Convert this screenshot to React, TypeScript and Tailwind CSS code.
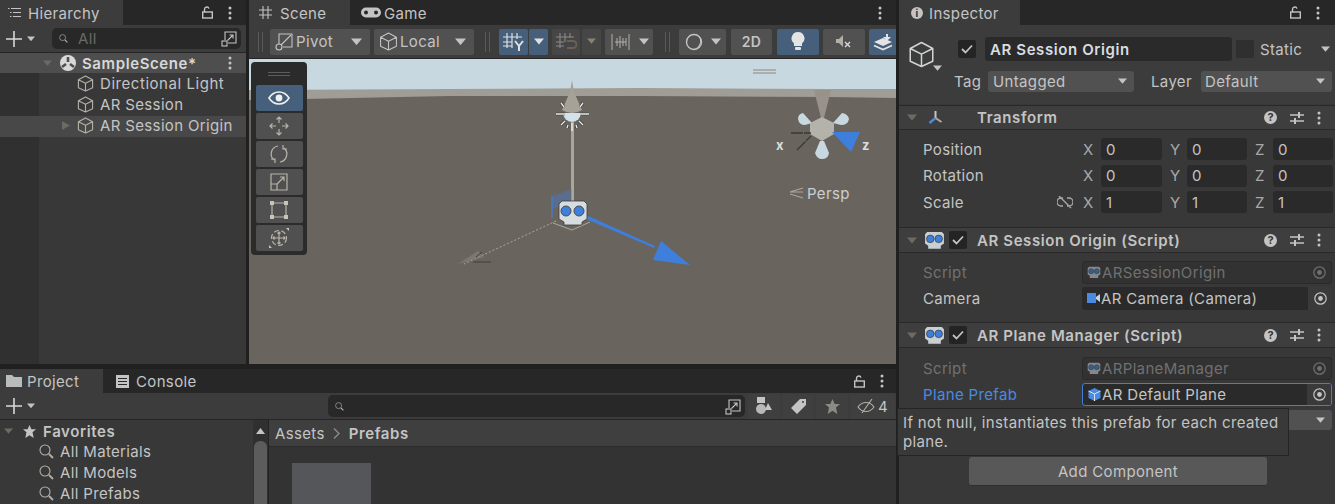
import React from "react";

const C = "#c4c4c4";
const Arrow = ({ c = "#c4c4c4", s = 9, cls = "" }: { c?: string; s?: number; cls?: string }) => (
  <svg width={s} height={s * 0.7} viewBox="0 0 10 7" className={"shrink-0 " + cls}><path d="M0 0.5h10L5 6.5z" fill={c} /></svg>
);
const Dots = ({ cls = "" }: { cls?: string }) => (
  <svg width="4" height="14" viewBox="0 0 4 14" className={"shrink-0 " + cls}><circle cx="2" cy="2" r="1.5" fill={C} /><circle cx="2" cy="7" r="1.5" fill={C} /><circle cx="2" cy="12" r="1.5" fill={C} /></svg>
);
const Lock = () => (
  <svg width="11" height="13" viewBox="0 0 11 13" className="shrink-0" fill="none" stroke={C} strokeWidth="1.4"><rect x="0.7" y="6" width="9.6" height="6" /><path d="M2.5 6V3.2a2.3 2.3 0 0 1 4.5-.6" /></svg>
);
const Cube = ({ s = 17, c = "#b4b0a8", w = 1.2 }: { s?: number; c?: string; w?: number }) => (
  <svg width={s} height={s} viewBox="0 0 18 18" className="shrink-0" fill="none" stroke={c} strokeWidth={w} strokeLinejoin="round"><path d="M9 1l7.5 4v8.5L9 17l-7.5-3.5V5zM1.5 5L9 8.8 16.5 5M9 8.8V17" /></svg>
);
const Robot = ({ s = 21, dim = false }: { s?: number; dim?: boolean }) => (
  <svg width={s} height={s * 0.9} viewBox="0 0 20 18" className="shrink-0" opacity={dim ? 0.55 : 1}>
    <path d="M3 1h14l2 2v9l-3 2v3H4v-3l-3-2V3z" fill="#c9cfd2" />
    <circle cx="6" cy="7.5" r="3.6" fill="#3f7fdc" stroke="#3a3a3a" strokeWidth=".7" />
    <circle cx="14" cy="7.5" r="3.6" fill="#3f7fdc" stroke="#3a3a3a" strokeWidth=".7" />
  </svg>
);
const ExpandBtn = () => (
  <svg width="17" height="17" viewBox="0 0 17 17" fill="none" stroke={C} strokeWidth="1.1" className="shrink-0"><path d="M4 10V2h11v11H7" /><rect x="1" y="11" width="5" height="5" /><path d="M6.5 10.5L12 5M8.5 5H12v3.5" /></svg>
);
const Search = ({ s = 15 }: { s?: number }) => (
  <svg width={s} height={s} viewBox="0 0 15 15" fill="none" stroke="#b4b0a8" strokeWidth="1.1" className="shrink-0"><circle cx="6" cy="6" r="5" /><path d="M10 10l4 4" strokeWidth="1.8" /></svg>
);
const Tune = () => (
  <svg width="14" height="12" viewBox="0 0 14 12" stroke={C} strokeWidth="1.3" className="shrink-0"><path d="M0 3h14M0 9h14" /><path d="M9 0v6M5 6v6" strokeWidth="2" /></svg>
);
const Help = () => (
  <span className="w-[13px] h-[13px] rounded-full bg-[#c4c4c4] text-[#333] text-[11px] font-bold flex items-center justify-center leading-none tracking-normal">?</span>
);
const Check = () => (
  <span className="w-[18px] h-[18px] bg-[#242424] rounded-[2px] flex items-center justify-center shrink-0">
    <svg width="12" height="10" viewBox="0 0 12 10" fill="none" stroke="#c4c4c4" strokeWidth="1.8"><path d="M1 5l3.5 3.5L11 1.5" /></svg>
  </span>
);
const Target = ({ dim = false }: { dim?: boolean }) => (
  <svg width="13" height="13" viewBox="0 0 13 13" fill="none" stroke={dim ? "#707070" : C} strokeWidth="1.2" className="shrink-0"><circle cx="6.5" cy="6.5" r="5.7" /><circle cx="6.5" cy="6.5" r="1.8" fill={dim ? "#707070" : C} /></svg>
);

const TB = ({ cls, bg = "bg-[#515151]", children }: { cls: string; bg?: string; children?: React.ReactNode }) => (
  <div className={"h-[26px] rounded-[2px] flex items-center justify-center shrink-0 " + bg + " " + cls}>{children}</div>
);
const Sep = ({ cls }: { cls: string }) => (
  <div className={"w-[5px] h-[20px] border-x border-[#5a5a5a] shrink-0 " + cls} />
);

const ROW = "h-[21px] flex items-center pb-[2px]";
const BLUE = "bg-[#46607c]";
const DIM = "bg-[#464646]";
const BOLD = "font-semibold tracking-[0.6px]";

function Hierarchy() {
  return (
    <div className="w-[246px] flex flex-col shrink-0 h-full">
      <div className="h-[25px] flex items-center bg-[#272727] shrink-0">
        <div className="w-[123px] h-full bg-[#3c3c3c] flex items-center pl-[8px] gap-[7px]">
          <svg width="13" height="11" viewBox="0 0 13 11" stroke={C} strokeWidth="1.2" className="shrink-0"><path d="M3 1.5h10M5 5.5h8M5 9.5h8" /><path d="M0 1.5h1.5M2 5.5h1.5M2 9.5h1.5" /></svg>
          <span className="pt-[2px]">Hierarchy</span>
        </div>
        <div className="flex-1 flex justify-end items-center gap-[15px] pr-[14px]"><Lock /><Dots /></div>
      </div>
      <div className="h-[28px] bg-[#3c3c3c] flex items-center shrink-0 border-b border-[#252525]">
        <svg width="16" height="16" viewBox="0 0 16 16" stroke="#d8d8d8" strokeWidth="1.6" className="ml-[6px]"><path d="M8 0v16M0 8h16" /></svg>
        <Arrow cls="ml-[5px]" s={8} />
        <div className="ml-[17px] w-[189px] h-[21px] rounded-[5px] bg-[#282828] flex items-center pl-[7px]">
          <Search s={9} />
          <span className="ml-[10px] text-[#6a6a6a]">All</span>
          <span className="ml-auto mr-[3px]"><ExpandBtn /></span>
        </div>
      </div>
      <div className="flex-1 bg-[linear-gradient(90deg,#303030_39px,#383838_39px)] flex flex-col">
        <div className={"h-[20px] bg-[#4e4e4e] flex items-center text-[#d8d8d8] mb-[1px] " + BOLD}>
          <Arrow c="#6d6a60" cls="ml-[43px]" s={9} />
          <svg width="16" height="16" viewBox="0 0 16 16" className="ml-[8px] shrink-0"><circle cx="8" cy="8" r="8" fill="#d8d8d8" /><path d="M8 2v5M2 12l4-3M14 12l-4-3" stroke="#4e4e4e" strokeWidth="2.6" /></svg>
          <span className="ml-[6px]">SampleScene*</span>
          <Dots cls="ml-auto mr-[14px]" />
        </div>
        <div className={ROW + " pl-[77px] gap-[6px]"}><Cube /><span className="tracking-[0.55px]">Directional Light</span></div>
        <div className={ROW + " pl-[77px] gap-[6px]"}><Cube />AR Session</div>
        <div className={ROW + " pl-[62px] gap-[6px] bg-[#484848]"}>
          <svg width="8" height="9" viewBox="0 0 8 9" className="shrink-0 mr-[1px]"><path d="M0 0l8 4.5L0 9z" fill="#6d6a60" /></svg>
          <Cube />AR Session Origin
        </div>
      </div>
    </div>
  );
}

function SceneToolbar() {
  return (
    <div className="h-[34px] bg-[#3c3c3c] flex items-center pl-[9px] shrink-0 overflow-hidden border-b border-[#252525]">
      <Sep cls="" />
      <TB cls="ml-[7px] w-[100px] justify-start pl-[5px]">
        <svg width="18" height="18" viewBox="0 0 18 18" fill="none" stroke={C} strokeWidth="1.1" className="shrink-0"><path d="M4 11V1h13v13H8" /><circle cx="4" cy="14" r="3" /><path d="M6 12L16 2" /></svg>
        <span className="ml-[3px]">Pivot</span><Arrow cls="ml-auto mr-[8px]" s={11} />
      </TB>
      <TB cls="ml-[4px] w-[100px] justify-start pl-[5px]">
        <Cube s={19} c={C} w={1} />
        <span className="ml-[2px]">Local</span><Arrow cls="ml-auto mr-[8px]" s={11} />
      </TB>
      <Sep cls="ml-[11px]" />
      <TB bg={BLUE} cls="ml-[9px] w-[29px]">
        <svg width="22" height="20" viewBox="0 0 22 20" fill="none" stroke="#e0e0e0" strokeWidth="1.2"><path d="M4 1v15M9 1v15M14 1v6M0 5h19M0 10h9M0 14h9" /><path d="M12 9l4 5 4-5M16 14v5" strokeWidth="2" /></svg>
      </TB>
      <TB bg={BLUE} cls="ml-px w-[19px]"><Arrow s={10} c="#e0e0e0" /></TB>
      <TB bg={DIM} cls="ml-[4px] w-[28px]">
        <svg width="22" height="20" viewBox="0 0 22 20" fill="none" stroke="#8a8a8a" strokeWidth="1.1"><path d="M5 1v15M10 1v9M15 1v5M1 5h18M1 10h8M1 14h8" /><path d="M12 9h6a3 3 0 0 1 0 7h-6" stroke="#6d6055" strokeWidth="2" /></svg>
      </TB>
      <TB bg={DIM} cls="ml-[2px] w-[19px]"><Arrow s={9} c="#8a8270" /></TB>
      <TB cls="ml-[4px] w-[48px] justify-start pl-[6px]">
        <svg width="20" height="18" viewBox="0 0 20 18" fill="none" stroke="#b4b0a8" strokeWidth="1"><path d="M1 1v16M18 1v16M4 9h11M6 5v8M9 3v12M12 5v8M15 5v8" /></svg>
        <Arrow cls="ml-auto mr-[4px]" s={10} />
      </TB>
      <Sep cls="ml-[12px]" />
      <TB cls="ml-[9px] w-[47px] justify-start pl-[6px]">
        <svg width="18" height="18" viewBox="0 0 18 18" fill="none"><circle cx="9" cy="9" r="7.5" stroke="#c4c4c4" strokeWidth="1.4" /><path d="M13 2.5a8 8 0 0 1-5 13.5 7.5 7.5 0 0 0 8-8 7 7 0 0 0-3-5.5z" fill="#d8d8d8" /></svg>
        <Arrow cls="ml-auto mr-[5px]" s={10} />
      </TB>
      <TB cls="ml-[5px] w-[41px] font-semibold text-[14px]">2D</TB>
      <TB bg={BLUE} cls="ml-[5px] w-[42px]">
        <svg width="14" height="19" viewBox="0 0 14 19"><path d="M7 0a6.5 6.5 0 0 1 4 11.6V14H3v-2.4A6.5 6.5 0 0 1 7 0z" fill="#e4e4e4" /><rect x="4" y="15" width="6" height="3" rx="1" fill="#e4e4e4" /></svg>
      </TB>
      <TB cls="ml-[4px] w-[42px]">
        <svg width="16" height="14" viewBox="0 0 16 14"><path d="M0 4h3l4-4v12L3 8H0z" fill="#b4b0a8" /><path d="M9 7l5 5M14 7l-5 5" stroke="#d8d8d8" strokeWidth="1.4" /></svg>
      </TB>
      <TB bg={BLUE} cls="ml-[4px] w-[28px]">
        <svg width="20" height="18" viewBox="0 0 20 18"><path d="M1 9l9 4 9-4-9-4z" fill="#e4e4e4" /><path d="M1 12.5l9 4 9-4" fill="none" stroke="#e4e4e4" strokeWidth="1.6" /><path d="M13 1h2v3h3l-4 4-4-4h3z" fill="#e4e4e4" /></svg>
      </TB>
    </div>
  );
}

const OverlayBtn = ({ active, children }: { active?: boolean; children: React.ReactNode }) => (
  <div className={"h-[26px] w-[47px] flex items-center justify-center rounded-[2px] " + (active ? "bg-[#46607c]" : "bg-[#505050]")}>{children}</div>
);

function SceneTools() {
  const p = { fill: "none", stroke: "#b8b4aa", strokeWidth: 1.2 };
  return (
    <div className="absolute left-[2px] top-[3px] w-[56px] h-[193px] bg-[#2b2b2b] rounded-[4px] flex flex-col items-center">
      <div className="h-[23px] flex items-center shrink-0">
        <div className="w-[22px] h-[4px] border-y border-[#5c5c5c]" />
      </div>
      <div className="flex flex-col gap-[2px]">
        <OverlayBtn active>
          <svg width="22" height="14" viewBox="0 0 22 14"><path d="M1 7c5-8 15-8 20 0-5 8-15 8-20 0z" fill="none" stroke="#f0f0f0" strokeWidth="1.6" /><circle cx="11" cy="7" r="3.4" fill="#f0f0f0" /></svg>
        </OverlayBtn>
        <OverlayBtn>
          <svg width="20" height="20" viewBox="0 0 20 20" {...p}><path d="M10 1v6M10 13v6M1 10h6M13 10h6M7.5 3.5L10 1l2.5 2.5M7.5 16.5L10 19l2.5-2.5M3.5 7.5L1 10l2.5 2.5M16.5 7.5L19 10l-2.5 2.5" /></svg>
        </OverlayBtn>
        <OverlayBtn>
          <svg width="20" height="20" viewBox="0 0 20 20" {...p}><path d="M9 2a8 8 0 0 0-4 14M11 18a8 8 0 0 0 4-14M2 15h4v4M18 5h-4V1" /></svg>
        </OverlayBtn>
        <OverlayBtn>
          <svg width="18" height="18" viewBox="0 0 18 18" {...p}><path d="M1 1h16v16H1zM1 11h6v6M7 11L14 4M10 4h4v4" /></svg>
        </OverlayBtn>
        <OverlayBtn>
          <svg width="18" height="18" viewBox="0 0 18 18" {...p}><path d="M4 2h10M4 16h10M2 4v10M16 4v10" /><g fill="#c8c4ba" stroke="none"><rect x="0" y="0" width="4" height="4" /><rect x="14" y="0" width="4" height="4" /><rect x="0" y="14" width="4" height="4" /><rect x="14" y="14" width="4" height="4" /></g></svg>
        </OverlayBtn>
        <OverlayBtn>
          <svg width="20" height="20" viewBox="0 0 20 20" {...p}><circle cx="10" cy="10" r="7.5" strokeDasharray="5 2.5" /><path d="M10 4v12M4 10h12M8.5 5.5L10 4l1.5 1.5M8.5 14.5L10 16l1.5-1.5M5.5 8.5L4 10l1.5 1.5M14.5 8.5L16 10l-1.5 1.5" /><path d="M17 0h3v3zM0 20v-3l3 3z" fill="#c8c4ba" stroke="none" /></svg>
        </OverlayBtn>
      </div>
    </div>
  );
}

function Scene() {
  return (
    <div className="w-[647px] ml-[3px] flex flex-col shrink-0 h-full">
      <div className="h-[25px] bg-[#272727] flex items-center shrink-0">
        <div className="w-[101px] h-full bg-[#3c3c3c] flex items-center pl-[10px] gap-[8px]">
          <svg width="13" height="13" viewBox="0 0 13 13" stroke={C} strokeWidth="1.1" className="shrink-0"><path d="M4 0v13M9 0v13M0 4h13M0 9h13" /></svg>
          <span className="pt-[2px]">Scene</span>
        </div>
        <div className="ml-[11px] flex items-center gap-[3px]">
          <svg width="20" height="11" viewBox="0 0 20 11" className="shrink-0"><rect width="20" height="10" y="0.5" rx="5" fill={C} /><circle cx="5" cy="5.5" r="2" fill="#272727" /><circle cx="15" cy="5.5" r="2" fill="#272727" /></svg>
          <span className="pt-[2px]">Game</span>
        </div>
        <Dots cls="ml-auto mr-[14px]" />
      </div>
      <SceneToolbar />
      <div className="relative flex-1 overflow-hidden bg-[#6a645e]">
        <svg viewBox="249 59 647 305" width="647" height="305" className="absolute inset-0">
          <rect x="249" y="59" width="647" height="305" fill="#6a645e" />
          <path d="M249 59h647v33H249z" fill="#c8d8e0" />
          <path d="M249 90L450 89 640 88 830 89 896 89v9L830 97 640 96 450 96 249 100z" fill="#9f9d95" />
          <path d="M753 70h23M753 73h23" stroke="#8a847c" strokeWidth="1.2" />
          {/* directional light */}
          <path d="M572 80l2 12 8 18q-10 6-20 0l8-18z" fill="#a6a298" />
          <rect x="571" y="122" width="3" height="80" fill="#aaa69c" />
          <path d="M563 113a9 9 0 0 0 18 0z" fill="#d3e1e8" />
          <g stroke="#33312f" strokeWidth="2.6">
            <path d="M556 114h9M580 114h9M561 103l3 4M583 103l-3 4M561 125l4-4M583 125l-4-4M567 128l1-3M577 128l-1-3" />
          </g>
          <g stroke="#e8eef0" strokeWidth="1.4">
            <path d="M556 114h9M580 114h9M561 103l3 4M583 103l-3 4M561 125l4-4M583 125l-4-4M567 128l1-3M577 128l-1-3M572 131v-8" />
          </g>
          {/* x axis */}
          <path d="M556 221L464 264" stroke="#aaa69c" strokeWidth="1" strokeDasharray="2 2" />
          <path d="M458 264l20-13 6 6z" fill="#8a867c" opacity=".6" />
          <path d="M473 262h18M482 252l-6 5" stroke="#403c3a" strokeWidth="1" />
          {/* base */}
          <path d="M553 223l19 7 18-8" fill="none" stroke="#aaa69c" strokeWidth="1" />
          <path d="M552 196l20-7v14l-20 6z" fill="#3f7fdc" opacity=".35" />
          <path d="M552 196v22" stroke="#3f7fdc" strokeWidth="1.2" />
          {/* z arrow */}
          <path d="M586 215L655 246l-1 2L586 219z" fill="#3f7fdc" />
          <path d="M661 241l29 24-37-5z" fill="#3f7fdc" />
          {/* robot */}
          <path d="M562 201h22l3 3v15l-5 3v3h-18v-3l-5-3v-15z" fill="#d6dde0" stroke="#3d3a38" strokeWidth=".8" />
          <circle cx="566" cy="211" r="5" fill="#3f7fdc" stroke="#4b4b4b" />
          <circle cx="579" cy="211" r="5" fill="#3f7fdc" stroke="#4b4b4b" />
          {/* nav gizmo */}
          <path d="M814 90h17l-7 28h-3z" fill="#98928a" />
          <path d="M812 123L803 113Q798 114 798 119 799 125 805 125z" fill="#c8d8e0" />
          <path d="M833 123L842 113Q848 114 849 119 848 125 841 125z" fill="#c8d8e0" />
          <path d="M820 141L815 153Q817 159 822 159 828 159 829 153L824 141z" fill="#c8d8e0" />
          <path d="M822 117l12 6v11l-12 7-12-7v-11z" fill="#b4b2aa" />
          <path d="M832 132h28l-9 20z" fill="#3f7fdc" />
          <path d="M791 133h20M797 150l14-14" stroke="#39383a" strokeWidth="1.3" strokeDasharray="12 1" />
          <path d="M790 192l13-4M790 192l13 0M790 194l13 4" stroke="#aaa69c" strokeWidth="1.2" fill="none" />
        </svg>
        <div className="absolute left-[527px] top-[80px] text-[#d8dcdc] font-bold text-[13px] leading-none">x</div>
        <div className="absolute left-[613px] top-[80px] text-[#d8dcdc] font-bold text-[13px] leading-none">z</div>
        <div className="absolute left-[558px] top-[125px] text-[#c8d0d2] leading-[20px]">Persp</div>
        <SceneTools />
      </div>
    </div>
  );
}

function Project() {
  const Fav = ({ t }: { t: string }) => (
    <div className="h-[21px] flex items-center pl-[39px] gap-[6px] shrink-0"><Search />{t}</div>
  );
  const Btn = ({ w, children }: { w: string; children: React.ReactNode }) => (
    <div className={"h-[25px] bg-[#3f3f3f] flex items-center justify-center shrink-0 " + w}>{children}</div>
  );
  return (
    <div className="h-[135px] mt-[5px] flex flex-col shrink-0 w-[896px]">
      <div className="h-[24px] bg-[#272727] flex items-center shrink-0">
        <div className="w-[103px] h-full bg-[#3c3c3c] flex items-center pl-[6px] gap-[5px]">
          <svg width="16" height="12" viewBox="0 0 16 12" className="shrink-0"><path d="M0 0h6l2 2h8v10H0z" fill="#b8bcbc" /></svg>
          Project
        </div>
        <div className="ml-[13px] flex items-center gap-[7px]">
          <svg width="13" height="13" viewBox="0 0 13 13" className="shrink-0"><rect width="13" height="13" fill="#c4c4c4" /><path d="M2 3.5h9M2 6.5h9M2 9.5h9" stroke="#272727" /></svg>
          Console
        </div>
        <div className="ml-auto mr-[12px] flex items-center gap-[15px]"><Lock /><Dots /></div>
      </div>
      <div className="h-[27px] bg-[#3c3c3c] flex items-center shrink-0 border-b border-[#252525]">
        <svg width="16" height="16" viewBox="0 0 16 16" stroke="#d8d8d8" strokeWidth="1.6" className="ml-[6px]"><path d="M8 0v16M0 8h16" /></svg>
        <Arrow cls="ml-[5px]" s={8} />
        <div className="ml-[293px] w-[417px] h-[22px] rounded-[5px] bg-[#282828] flex items-center pl-[7px]">
          <Search s={9} />
          <span className="ml-auto mr-[3px]"><ExpandBtn /></span>
        </div>
        <div className="ml-[3px] flex gap-[2px]">
          <Btn w="w-[32px]">
            <svg width="16" height="18" viewBox="0 0 16 18"><rect x="1" y="0" width="8" height="6" fill="#c4c4c4" /><circle cx="5" cy="12" r="5" fill="#b8b8b8" /><path d="M12 6l4 7h-7z" fill="#c4c4c4" /></svg>
          </Btn>
          <Btn w="w-[32px]">
            <svg width="15" height="15" viewBox="0 0 15 15"><path d="M9 0h6v6l-9 9-6-6z" fill="#c4c4c4" /><circle cx="12" cy="3" r="1" fill="#3f3f3f" /></svg>
          </Btn>
          <Btn w="w-[32px]">
            <svg width="15" height="15" viewBox="0 0 15 15"><path d="M7.5 0l2.2 5H15l-4 3.5L12.3 15 7.5 11.8 2.7 15 4 8.5 0 5h5.3z" fill="#8c8a84" /></svg>
          </Btn>
          <Btn w="w-[45px] gap-[3px]">
            <svg width="18" height="15" viewBox="0 0 18 15" fill="none" stroke="#b4b0a8" strokeWidth="1.1"><path d="M1 8c4-6 12-6 16 0-4 6-12 6-16 0z" /><path d="M15 0L5 14" /></svg>
            <span>4</span>
          </Btn>
        </div>
      </div>
      <div className="flex-1 flex min-h-0">
        <div className="w-[253px] bg-[#383838] flex flex-col pt-[1px] overflow-hidden shrink-0">
          <div className={"h-[20px] flex items-center shrink-0 pl-[4px] " + BOLD}>
            <Arrow c="#6d6a60" s={9} />
            <svg width="13" height="13" viewBox="0 0 15 15" className="ml-[10px] mr-[7px] shrink-0"><path d="M7.5 0l2.2 5H15l-4 3.5L12.3 15 7.5 11.8 2.7 15 4 8.5 0 5h5.3z" fill="#c4c4c4" /></svg>
            Favorites
          </div>
          <Fav t="All Materials" />
          <Fav t="All Models" />
          <Fav t="All Prefabs" />
        </div>
        <div className="w-[15px] bg-[#303030] flex flex-col items-center shrink-0 pt-[8px]">
          <svg width="9" height="6" viewBox="0 0 9 6"><path d="M0 6L4.5 0 9 6z" fill="#c4c4c4" /></svg>
          <div className="mt-[7px] w-[13px] flex-1 bg-[#5c5c5c] rounded-t-[6px]" />
        </div>
        <div className="w-px bg-[#232323] shrink-0" />
        <div className="flex-1 flex flex-col bg-[#333333]">
          <div className="h-[27px] bg-[#3f3f3f] flex items-center pl-[6px] shrink-0 border-b border-[#2a2a2a]">
            Assets
            <svg width="8" height="11" viewBox="0 0 8 11" fill="none" stroke="#8a8a8a" strokeWidth="1.4" className="mx-[8px]"><path d="M1 0.5l5 5-5 5" /></svg>
            <span className={BOLD}>Prefabs</span>
          </div>
          <div className="pl-[23px] pt-[16px] overflow-hidden flex-1">
            <div className="w-[79px] h-[60px] bg-[#55565a]" />
          </div>
        </div>
      </div>
    </div>
  );
}

const Field = ({ v, w = "w-[60px]" }: { v: string; w?: string }) => (
  <div className={"h-[22px] bg-[#2a2a2a] rounded-[3px] flex items-center pl-[5px] shrink-0 " + w}>{v}</div>
);
const Vec = ({ label, a, b, c, link }: { label: string; a: string; b: string; c: string; link?: boolean }) => (
  <div className="h-[26.5px] flex items-center pl-[24px] relative">
    <span className="w-[130px] shrink-0">{label}</span>
    <span className="w-[24px] shrink-0 flex justify-center">
      {link && (
        <svg width="16" height="13" viewBox="0 0 16 13" fill="none" stroke="#a8a8a8" strokeWidth="1.4"><path d="M6 2H4a3 3 0 0 0 0 8h2M10 2h2a3 3 0 0 1 0 8h-2M2 0l12 12" /></svg>
      )}
    </span>
    <span className="w-[24px] shrink-0 pl-[6px] text-[#a8a8a8]">X</span><Field v={a} w="w-[61px]" />
    <span className="w-[25px] shrink-0 pl-[8px] text-[#a8a8a8]">Y</span><Field v={b} />
    <span className="w-[26px] shrink-0 pl-[8px] text-[#a8a8a8]">Z</span><Field v={c} />
  </div>
);
const CompHead = ({ title }: { title: string }) => (
  <div className={"h-[26px] bg-[#3e3e3e] flex items-center pl-[8px] pr-[14px] shrink-0 border-y border-[#292929] " + BOLD}>
    <Arrow c="#6d6a60" s={10} />
    <span className="ml-[7px]"><Robot /></span>
    <span className="ml-[4px]"><Check /></span>
    <span className="ml-[10px]">{title}</span>
    <div className="ml-auto flex items-center gap-[13px]"><Help /><Tune /><Dots /></div>
  </div>
);
const ObjRow = ({ label, value, dim, blue, selected, icon }: { label: string; value: string; dim?: boolean; blue?: boolean; selected?: boolean; icon: React.ReactNode }) => (
  <div className="h-[26px] flex items-center pl-[24px]">
    <span className={"w-[159px] shrink-0 " + (dim ? "text-[#717171]" : blue ? "text-[#4a8ae0]" : "")}>{label}</span>
    <div className={"w-[250px] h-[23px] rounded-[3px] flex items-center overflow-hidden " + (dim ? "bg-[#323232] border border-[#2a2a2a]" : selected ? "bg-[#2a2a2a] border border-[#3f7fdc]" : "bg-[#2a2a2a]")}>
      <span className="w-[18px] flex justify-end shrink-0">{icon}</span>
      <span className={"ml-[1px] " + (dim ? "text-[#707070]" : "")}>{value}</span>
      <span className={"ml-auto w-[24px] h-full flex items-center justify-center " + (dim ? "" : "bg-[#3a3a3a]")}><Target dim={dim} /></span>
    </div>
  </div>
);

function Inspector() {
  return (
    <div className="w-[436px] ml-[3px] flex flex-col shrink-0 h-full relative bg-[#383838]">
      <div className="h-[25px] bg-[#272727] flex items-center shrink-0">
        <div className="w-[121px] h-full bg-[#3c3c3c] flex items-center pl-[12px] gap-[6px]">
          <span className="w-[12px] h-[12px] rounded-full bg-[#c4c4c4] text-[#333] text-[10px] font-bold flex items-center justify-center leading-none">i</span>
          <span className="pt-[2px]">Inspector</span>
        </div>
        <div className="ml-auto mr-[15px] flex items-center gap-[15px]"><Lock /><Dots /></div>
      </div>
      <div className="h-[79px] bg-[#3c3c3c] shrink-0 flex flex-col">
        <div className="h-[36px] flex items-end shrink-0">
          <span className="ml-[9px] mb-[-7px] mr-[23px]"><Cube s={27} c="#d0d4d6" w={1} /></span>
          <span className="mb-[3px]"><Check /></span>
          <div className={"ml-[9px] w-[247px] h-[24px] bg-[#2a2a2a] rounded-[3px] flex items-center pl-[5px] text-[#d8dde0] " + BOLD}>AR Session Origin</div>
          <span className="ml-[4px] w-[18px] h-[18px] bg-[#2f2f2f] rounded-[2px] mb-[3px]" />
          <span className="ml-[6px] mb-[4px]">Static</span>
          <Arrow cls="ml-[19px] mb-[9px]" s={9} />
        </div>
        <div className="h-[40px] flex items-center shrink-0">
          <Arrow cls="ml-[34px] mt-[-26px]" s={9} />
          <span className="ml-[12px] w-[34px] shrink-0">Tag</span>
          <div className="w-[146px] h-[21px] bg-[#515151] rounded-[3px] flex items-center pl-[5px] pr-[7px] justify-between shrink-0">Untagged<Arrow s={9} /></div>
          <span className="ml-[17px] w-[50px] shrink-0">Layer</span>
          <div className="w-[131px] h-[21px] bg-[#515151] rounded-[3px] flex items-center pl-[4px] pr-[7px] justify-between shrink-0">Default<Arrow s={9} /></div>
        </div>
      </div>
      <div className="mt-[1px]">
        <div className={"h-[25px] bg-[#3e3e3e] flex items-center pl-[8px] pr-[14px] border-y border-[#292929] " + BOLD}>
          <Arrow c="#6d6a60" s={10} />
          <svg width="17" height="17" viewBox="0 0 17 17" className="ml-[10px] shrink-0"><path d="M8.5 2v7" stroke="#c4c4c4" strokeWidth="2" /><path d="M8.5 9l6 4" stroke="#b0aca2" strokeWidth="2" /><path d="M8.5 9l-6 5" stroke="#4a8ae0" strokeWidth="2.5" /></svg>
          <span className="ml-[33px]">Transform</span>
          <div className="ml-auto flex items-center gap-[13px]"><Help /><Tune /><Dots /></div>
        </div>
        <div className="pt-[6px] pb-[11.5px] flex flex-col">
          <Vec label="Position" a="0" b="0" c="0" />
          <Vec label="Rotation" a="0" b="0" c="0" />
          <Vec label="Scale" a="1" b="1" c="1" link />
        </div>
      </div>
      <CompHead title="AR Session Origin (Script)" />
      <div className="pt-[6px] pb-[11px]">
        <ObjRow label="Script" value="ARSessionOrigin" dim icon={<Robot s={14} dim />} />
        <ObjRow label="Camera" value="AR Camera (Camera)" icon={
          <svg width="13" height="10" viewBox="0 0 13 10"><rect width="9" height="10" fill="#4a8ae0" /><path d="M9 4l4-3v8l-4-3z" fill="#c4d4e8" /></svg>
        } />
      </div>
      <CompHead title="AR Plane Manager (Script)" />
      <div className="pt-[7px]">
        <ObjRow label="Script" value="ARPlaneManager" dim icon={<Robot s={14} dim />} />
        <ObjRow label="Plane Prefab" value="AR Default Plane" blue selected icon={
          <svg width="13" height="13" viewBox="0 0 13 13"><path d="M6.5 0l6 3v7l-6 3-6-3V3z" fill="#4a8ae0" /><path d="M.5 3l6 3 6-3M6.5 6v7" stroke="#d8e4f0" fill="none" /></svg>
        } />
      </div>
      <div className="mt-[3px] ml-[183px] w-[250px] h-[20px] bg-[#515151] rounded-[3px] flex items-center justify-end pr-[7px] shrink-0"><Arrow s={9} /></div>
      <div className="mt-[27px] ml-[70px] w-[298px] h-[29px] bg-[#585858] rounded-[3px] flex items-center justify-center shrink-0 border-b border-[#2f2f2f]">Add Component</div>
      <div className="absolute left-[-2px] top-[408px] w-[392px] h-[48px] bg-[#393939] border border-[#252525] px-[5px] pt-[4px] leading-[19px] text-[15px] tracking-[0.35px]">
        If not null, instantiates this prefab for each created plane.
      </div>
    </div>
  );
}

export default function App() {
  return (
    <div className="w-[1335px] h-[504px] overflow-hidden bg-[#202020] flex text-[#c4c4c4] text-[15px] leading-none tracking-[0.35px]" style={{ fontFamily: "Inter, 'Liberation Sans', sans-serif" }}>
      <div className="w-[896px] shrink-0 flex flex-col h-full">
        <div className="h-[364px] flex shrink-0">
          <Hierarchy />
          <Scene />
        </div>
        <Project />
      </div>
      <Inspector />
    </div>
  );
}
